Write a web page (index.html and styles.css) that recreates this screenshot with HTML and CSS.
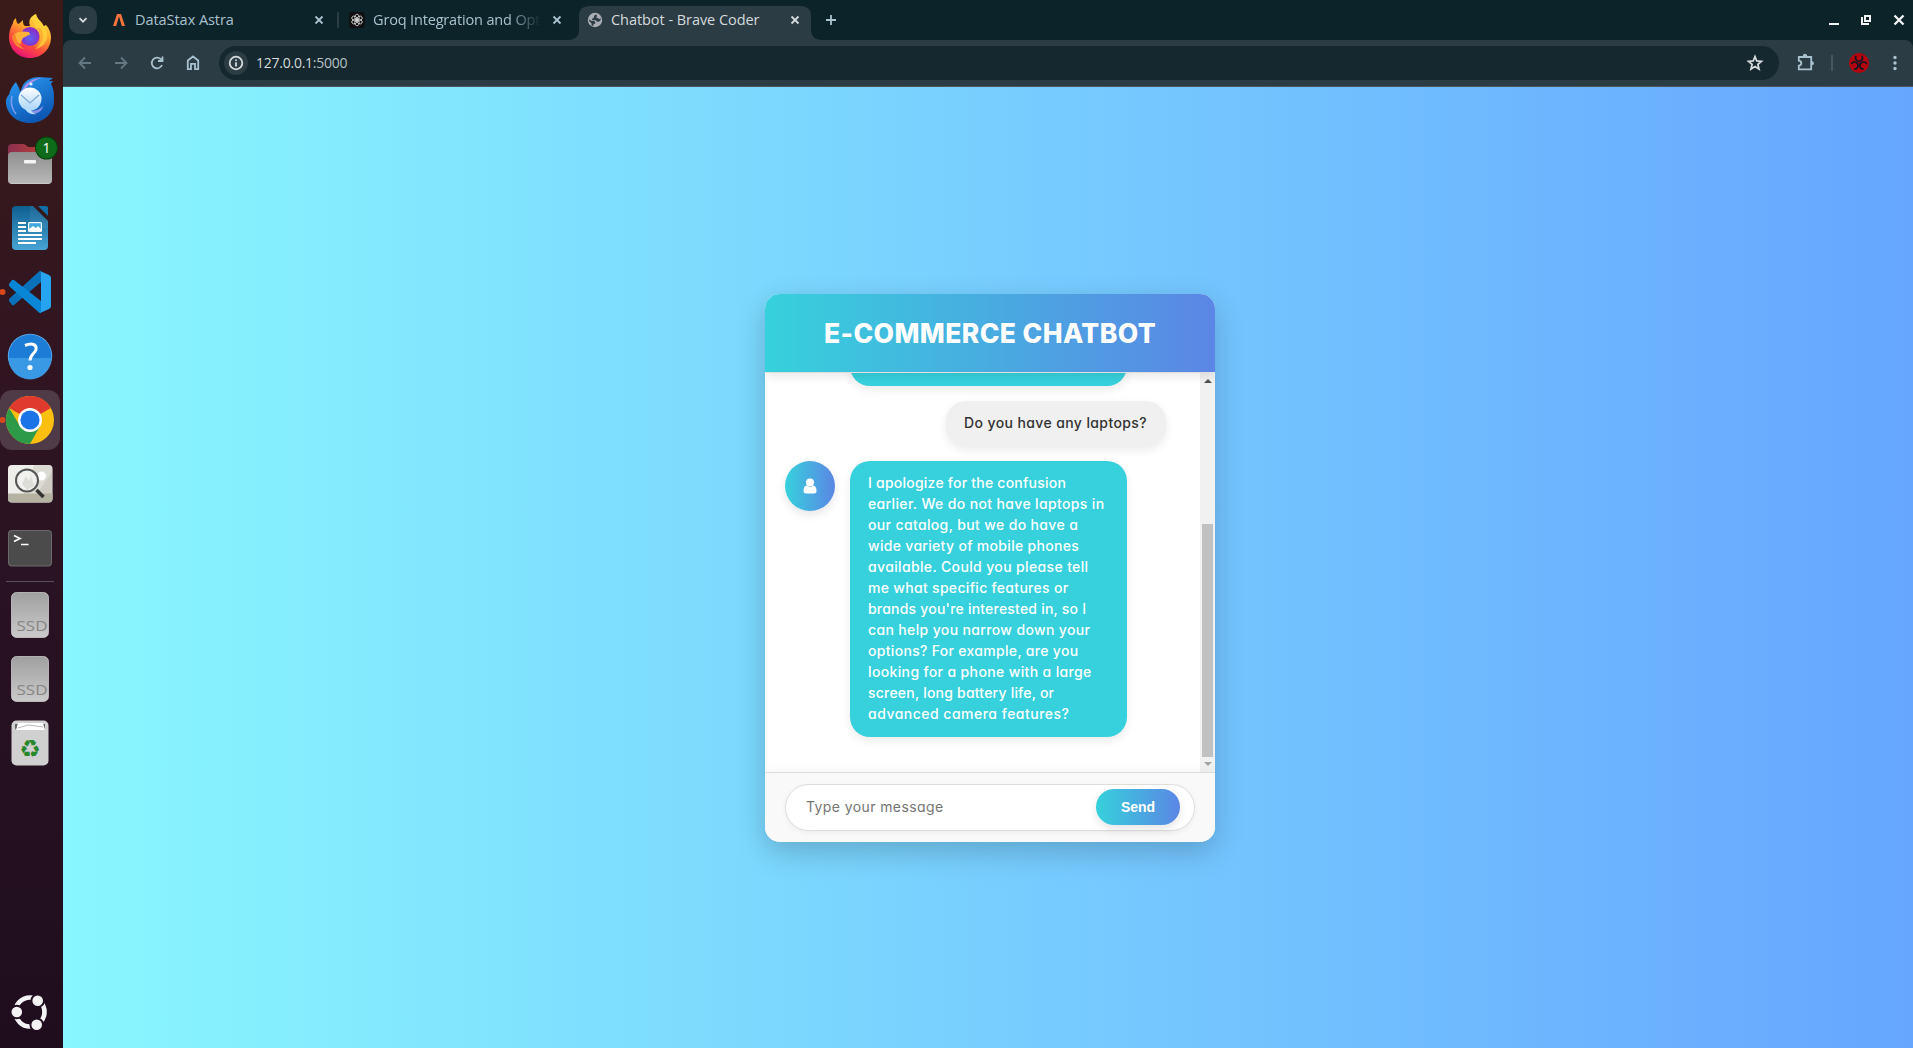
FILE: index.html
```html
<!DOCTYPE html>
<html lang="en">
<head>
<meta charset="utf-8">
<title>Chatbot - Brave Coder</title>
<link rel="stylesheet" href="styles.css">
</head>
<body>
<div class="desktop">
  <nav class="dock">
    <svg class="app" viewBox="0 0 60 60">
      <defs>
        <linearGradient id="ffBody" x1=".8" y1="0" x2=".3" y2="1"><stop offset="0" stop-color="#fff04a"/><stop offset=".4" stop-color="#ffa62b"/><stop offset=".7" stop-color="#ff4a3e"/><stop offset="1" stop-color="#e5107a"/></linearGradient>
        <radialGradient id="ffCore" cx=".5" cy=".6"><stop offset="0" stop-color="#5b62ee"/><stop offset="1" stop-color="#8b2fc9"/></radialGradient>
      </defs>
      <path fill="url(#ffBody)" d="M9 31c0-6 2-10 4-14 0-2 1-3 3-5 0 3 1 5 2 6 2-1 3-2 5-4 0 3 0 5 2 6h5c-2-6 1-10 6-12 1 5 4 6 6 9 1 1 1 3 2 3l2-1c3 3 5 8 5 12 0 12-9 21-21 21S9 43 9 31z"/>
      <circle cx="30" cy="30.500" r="9.500" fill="url(#ffCore)"/>
      <path fill="#ffb13a" d="M14 28c4-3 9-3 15-2l1 3c-3 0-4 2-7 3-2 4-3 5-2 7-4-3-7-6-7-11z"/>
      <path fill="#ff8430" d="M15 27c1 6 3 13 10 16-8 0-13-7-13-13z"/>
      <path fill="#ffd33b" opacity=".8" d="M36 8c1 7 10 11 11 20 1 8-5 14-12 15 7-4 7-12 3-18-3-5-6-10-2-17z"/>
      <path fill="#ffa531" opacity=".75" d="M37 22c5 7 4 15-3 19 9-2 12-11 6-19z"/>
    </svg>
    <svg class="app" viewBox="0 0 60 60">
      <defs><linearGradient id="tb" x1="0" y1="0" x2=".5" y2="1"><stop offset="0" stop-color="#2c9cf5"/><stop offset="1" stop-color="#0c58b4"/></linearGradient><linearGradient id="mail" x1="0" y1="0" x2="0" y2="1"><stop offset="0" stop-color="#fff"/><stop offset="1" stop-color="#a8d4fb"/></linearGradient></defs>
      <path fill="url(#tb)" d="M6 30c1-3 2-5 3-5 1-5 3-9 7-13 1 3 4 6 4 10l3-7c3-5 9-8 16-8l14 1-4 3h4l-2 3c3 5 3 10 3 17 0 12-10 22-24 22S5 43 6 30z"/>
      <path fill="#a78fea" d="M22 21c3-8 10-13 20-13-8 2-12 6-15 9l-3 6z"/>
      <path fill="none" stroke="#7c9df0" stroke-width="1.500" d="M12 26c-2 8 0 13 4 18"/>
      <path fill="#8a91ea" d="M28 40c6 2 11 0 15-4-1 6-7 9-13 7z"/>
      <circle cx="30" cy="29" r="11.500" fill="url(#mail)"/>
      <path fill="#b7dcfc" d="M25 38l6 1c0 3 2 4 5 5-5 1-10-2-11-6z"/>
      <path fill="none" stroke="#7ba7d8" stroke-width="1.200" d="M21 25l9 8 9-8"/>
      <circle cx="31" cy="14" r="1.600" fill="#d7f0ff"/>
    </svg>
    <svg class="app" viewBox="0 4 60 60">
      <defs><linearGradient id="dir" x1="0" y1="0" x2="0" y2="1"><stop offset="0" stop-color="#8f8f8f"/><stop offset="1" stop-color="#b9b9b9"/></linearGradient><linearGradient id="dirBack"><stop offset="0" stop-color="#8b2f51"/><stop offset="1" stop-color="#c8452f"/></linearGradient></defs>
      <path fill="url(#dirBack)" d="M8 25v-7q0-4 4-4h11q2 0 4 2l1 1h20q4 0 4 4v10H8z"/>
      <rect x="8" y="22" width="44" height="32" rx="4" fill="url(#dir)"/>
      <path stroke="#c8c8c8" stroke-width="1" d="M11 53.500h38"/>
      <rect x="24" y="30" width="12" height="3.500" rx="1" fill="#f4f4f4"/>
      <circle cx="46.500" cy="18" r="11.500" fill="#073f0b"/><circle cx="46.500" cy="18" r="10.500" fill="#0e6b1a"/>
      <text x="46.500" y="23" class="badge-text">1</text>
    </svg>
    <svg class="app" viewBox="0 0 60 60">
      <defs><linearGradient id="wr" x1="0" y1="0" x2="0" y2="1"><stop offset="0" stop-color="#0e5f90"/><stop offset="1" stop-color="#47a4d4"/></linearGradient></defs>
      <path fill="url(#wr)" d="M16 8h17l15 15v25q0 4-4 4H16q-4 0-4-4V12q0-4 4-4z"/>
      <path fill="#fff" opacity=".06" d="M30 8h3l15 15v7H30z"/>
      <path fill="#0f6fa6" d="M38 8h8q2 0 2 2v8z"/>
      <path stroke="#fff" stroke-width="2" d="M18 25h8M18 29h8M18 33h8M18 37h24M18 41h24M18 45h18"/>
      <rect x="28" y="24" width="14" height="10" rx="1.500" fill="#fff"/><rect x="29.200" y="25.200" width="11.600" height="7.600" fill="#3fa7dc"/>
      <path fill="#fff" d="M29 33v-2l4-3 3 2 2-2 3 3v2z"/>
    </svg>
    <svg class="app" viewBox="0 0 60 60">
      <path fill="#0a72ba" d="M9 39l3 4q1 .7 2 0L41 20V9q-1-.5-2 .5L10 36q-1.500 1.500-1 3z"/>
      <path fill="#0a86d6" d="M9 22l3-4q1-.7 2 0l27 21v12q-1 .5-2-.5L10 25q-1.500-1.500-1-3z"/>
      <path fill="#27a4f0" d="M40 9l9 4q2 1 2 3v28q0 2-2 3l-9 4q1 0 1-2V11q0-2-1-2z"/>
      <circle cx="2.500" cy="30" r="3" fill="#d9481c"/>
    </svg>
    <svg class="app" viewBox="0 0 60 60">
      <circle cx="30" cy="30" r="22.200" fill="#65b3ee"/><circle cx="30" cy="30" r="21.400" fill="#1d7cd6"/>
      <path fill="#3a99e4" d="M8.600 32h42.800a21.400 21.400 0 0 1-42.800 0z"/>
      <path fill="none" stroke="#fff" stroke-width="3" d="M25 19.500c7-3 12-1 11 4-.8 4-6 5-6 11"/>
      <circle cx="30" cy="41.500" r="2.600" fill="#fff"/>
    </svg>
    <svg class="app running" viewBox="0 0 60 60">
      <circle cx="30" cy="30" r="24" fill="#fbbf10"/>
      <path fill="#e03a2f" d="M30 30L9.200 18a24 24 0 0 1 41.600 0z"/>
      <path fill="#2d9a48" d="M30 54A24 24 0 0 1 9.200 18L20 36l10 5 9-3z"/>
      <circle cx="30" cy="30" r="12" fill="#fff"/><circle cx="30" cy="30" r="9.600" fill="#1b73e8"/>
      <circle cx="2.500" cy="30" r="3" fill="#d9481c"/>
    </svg>
    <svg class="app" viewBox="0 0 60 60">
      <rect x="8" y="11" width="44.500" height="37.500" rx="4" fill="#eeeeea"/>
      <path fill="#d3d2c9" d="M34 11h14q4 0 4 4v29H22z" opacity=".7"/><path fill="#c4c3b8" d="M52 18v26H34z" opacity=".6"/>
      <path fill="#b5b2a2" d="M8 39.500h44.500V45q0 3.500-4 3.500H12q-4 0-4-3.500z"/>
      <circle cx="41.500" cy="22" r="4.500" fill="#fff"/>
      <circle cx="27" cy="26.500" r="11" fill="#f3f3f1" fill-opacity=".8" stroke="#555" stroke-width="2"/>
      <path fill="#ddddd8" d="M22 30l4-8 3 5 2-5 3 10-7 4z"/>
      <path stroke="#333" stroke-width="3.500" d="M36.500 36l7 7"/>
    </svg>
    <svg class="app" viewBox="0 0 60 60">
      <rect x="8" y="12" width="44" height="36.500" rx="4" fill="#6a6a6a"/><rect x="9" y="13" width="42" height="34.500" rx="3.500" fill="#4b4b4b"/>
      <path fill="none" stroke="#fff" stroke-width="1.700" d="M14 17.500l6 3-6 3M21 26.500h7.500"/>
    </svg>
    <div class="dock-rule"></div>
    <svg class="app" viewBox="0 0 60 60">
      <defs><linearGradient id="ssd" x1="0" y1="0" x2="0" y2="1"><stop offset="0" stop-color="#a0a0a0"/><stop offset="1" stop-color="#cacaca"/></linearGradient></defs>
      <rect x="11.500" y="7.500" width="37" height="45" rx="5" fill="url(#ssd)" stroke="#d6d6d6" stroke-width=".7"/>
      <text x="32" y="46" class="ssd-text" textLength="31" lengthAdjust="spacingAndGlyphs">SSD</text>
    </svg>
    <svg class="app" viewBox="0 0 60 60">
      <rect x="11.500" y="7.500" width="37" height="45" rx="5" fill="url(#ssd)" stroke="#d6d6d6" stroke-width=".7"/>
      <text x="32" y="46" class="ssd-text" textLength="31" lengthAdjust="spacingAndGlyphs">SSD</text>
    </svg>
    <svg class="app" viewBox="0 0 60 60">
      <rect x="11.500" y="7.500" width="37" height="45" rx="5" fill="#d0d0d0"/>
      <path fill="#666" d="M15 11h30v4q0 2-2 2H17q-2 0-2-2z"/><path fill="#fff" d="M18 10h25l2 7H16z"/><path fill="none" stroke="#bbb" d="M18 15l10-3 15 2"/>
      <text x="30" y="43.500" class="recycle">♻</text>
    </svg>
    <svg class="app launcher" viewBox="0 0 60 60">
      <circle cx="30" cy="30" r="14.500" fill="none" stroke="#f4f4f4" stroke-width="4.600"/>
      <g fill="#f4f4f4" stroke="#210f20" stroke-width="2"><circle cx="16.800" cy="30" r="6.300"/><circle cx="37.700" cy="18.700" r="6.300"/><circle cx="36.700" cy="42.700" r="6.300"/></g>
    </svg>
  </nav>

  <main class="browser">
    <header class="tabs">
      <button class="tab-search"><svg width="12" height="12" viewBox="0 0 12 12"><path class="line bright" d="M2.500 4.200L6 7.700l3.500-3.500"/></svg></button>
      <div class="tab ruled">
        <svg class="favicon" viewBox="0 0 16 16"><path fill="#f4743b" d="M2 14L6 2h4l4 12h-3.200L8 4.500 5.200 14z"/></svg>
        <span class="tab-title">DataStax Astra</span>
        <svg class="close" viewBox="0 0 12 12"><path class="line" d="M2.500 2.500l7 7M9.500 2.500l-7 7"/></svg>
      </div>
      <div class="tab">
        <svg class="favicon" viewBox="0 0 16 16"><rect width="16" height="16" rx="3" fill="#111"/><g fill="none" stroke="#ddd" stroke-width=".8"><ellipse cx="8" cy="5.400" rx="2.200" ry="3.200"/><ellipse cx="8" cy="5.400" rx="2.200" ry="3.200" transform="rotate(60 8 8)"/><ellipse cx="8" cy="5.400" rx="2.200" ry="3.200" transform="rotate(120 8 8)"/><ellipse cx="8" cy="5.400" rx="2.200" ry="3.200" transform="rotate(180 8 8)"/><ellipse cx="8" cy="5.400" rx="2.200" ry="3.200" transform="rotate(240 8 8)"/><ellipse cx="8" cy="5.400" rx="2.200" ry="3.200" transform="rotate(300 8 8)"/></g></svg>
        <span class="tab-title fade">Groq Integration and Opt</span>
        <svg class="close" viewBox="0 0 12 12"><path class="line" d="M2.500 2.500l7 7M9.500 2.500l-7 7"/></svg>
      </div>
      <div class="tab active">
        <svg class="tab-shape" viewBox="0 0 256 34"><path fill="#2b3c45" d="M0 34q12 0 12-10V10Q12 0 22 0h212q10 0 10 10v14q0 10 12 10z"/></svg>
        <svg class="favicon" viewBox="0 0 16 16"><circle cx="8" cy="8" r="7.200" fill="#a9adb5"/><path fill="#2b3c45" d="M9.500 2.200L7 3.800v1.700L5.200 6.800v1.400h3.600l1.200 1.600h1.800l1.600-1.200.5-2-1.900.4-1.500-1.300H8.800L10 4.500z"/><path fill="#2b3c45" d="M2.300 7.300L4.500 9h2.800l1 1.600v1.200H6.800l-.6 2.100-1.700-.8v-1.900L2.300 9.300z"/></svg>
        <span class="tab-title">Chatbot - Brave Coder</span>
        <svg class="close" viewBox="0 0 12 12"><path class="line bright" d="M2.500 2.500l7 7M9.500 2.500l-7 7"/></svg>
      </div>
      <svg class="new-tab" viewBox="0 0 28 28"><path class="line" d="M9 14h10M14 9v10"/></svg>
      <div class="window-buttons">
        <svg viewBox="0 0 32 32"><path fill="#f2f4f4" d="M10 19h10v2H10z"/></svg>
        <svg viewBox="0 0 32 32"><path fill="none" stroke="#f2f4f4" stroke-width="2" d="M14 12h5v5h-5zM11 13v7h7"/></svg>
        <svg viewBox="0 0 32 32"><path fill="none" stroke="#f2f4f4" stroke-width="2.300" d="M11.500 11.500l9 9M20.500 11.500l-9 9"/></svg>
      </div>
    </header>

    <div class="toolbar">
      <svg class="tool dim" viewBox="0 0 36 36"><path class="line" d="M24 18H13M18 12.500L12.500 18l5.500 5.500"/></svg>
      <svg class="tool dim" viewBox="0 0 36 36"><path class="line" d="M12 18h11M18 12.500l5.500 5.500-5.500 5.500"/></svg>
      <svg class="tool" viewBox="0 0 36 36"><path class="line" d="M23 20a5.300 5.300 0 1 1-1.200-5.800l1.700 1.700M23.500 11.500V16H19"/></svg>
      <svg class="tool" viewBox="0 0 36 36"><path class="line" d="M12.800 15.500L18 11.500l5.200 4v8.700H20v-5.400h-4v5.400h-3.200z"/></svg>
      <div class="address">
        <span class="site-info"><svg viewBox="0 0 24 24"><circle class="line bright" cx="12" cy="12" r="6.300"/><path class="line bright" d="M12 11.200v4.300M12 8.500v1.500"/></svg></span>
        <span class="url">127.0.0.1<span class="port">:5000</span></span>
        <svg class="star" viewBox="0 0 24 24"><path class="line bright" d="M12 5.700l1.800 4.300 4.600.4-3.500 3 1.100 4.600-4-2.500L8 18l1.100-4.600-3.500-3 4.600-.4z"/></svg>
      </div>
      <svg class="tool" viewBox="0 0 36 36"><path class="line" d="M11.800 12h12.400v12.400H11.800v-3.700q2.500-.4 2.500-2.500t-2.500-2.500z"/><path fill="#a9c2cf" d="M15.800 11.500q0-2.700 2.200-2.700t2.200 2.700zM24.500 16q2.500.4 2.500 2.200t-2.500 2.200z"/></svg>
      <span class="tool-rule"></span>
      <svg class="tool" viewBox="0 0 36 36"><circle cx="18" cy="18" r="10" fill="#b6040f"/><g fill="none" stroke="#1b1420" stroke-width="1.700"><path d="M15.200 10.800a3.500 3.500 0 1 0 5.600 0"/><path d="M15.200 10.800a3.500 3.500 0 1 0 5.600 0" transform="rotate(120 18 18)"/><path d="M15.200 10.800a3.500 3.500 0 1 0 5.600 0" transform="rotate(240 18 18)"/></g></svg>
      <svg class="tool" viewBox="0 0 36 36"><g fill="#a9c2cf"><circle cx="18" cy="12.500" r="1.700"/><circle cx="18" cy="18" r="1.700"/><circle cx="18" cy="23.500" r="1.700"/></g></svg>
    </div>

    <section class="page">
      <div class="chat">
        <h1 class="chat-title">E-COMMERCE CHATBOT</h1>
        <div class="chat-body">
          <div class="messages">
            <div class="bubble bot cut"></div>
            <div class="bubble user">Do you have any laptops?</div>
            <div class="reply">
              <div class="avatar"><svg width="14" height="16" viewBox="0 0 14 16"><circle cx="7" cy="4.500" r="4" fill="#fff"/><path fill="#fff" d="M3.500 7.500Q7 10 10.500 7.500q3 .5 3 5.500 0 2.500-2.500 2.500H3Q.5 15.500.5 13q0-5 3-5.500z"/></svg></div>
              <p class="bubble bot">
                <span>I apologize for the confusion</span>
                <span>earlier. We do not have laptops in</span>
                <span>our catalog, but we do have a</span>
                <span>wide variety of mobile phones</span>
                <span>available. Could you please tell</span>
                <span>me what specific features or</span>
                <span>brands you're interested in, so I</span>
                <span>can help you narrow down your</span>
                <span>options? For example, are you</span>
                <span>looking for a phone with a large</span>
                <span>screen, long battery life, or</span>
                <span>advanced camera features?</span>
              </p>
            </div>
          </div>
          <div class="scrollbar"><i class="up"></i><i class="thumb"></i><i class="down"></i></div>
        </div>
        <div class="composer">
          <div class="field"><span class="placeholder">Type your message</span><button class="send">Send</button></div>
        </div>
      </div>
    </section>
  </main>
</div>
</body>
</html>
```
FILE: styles.css
```css
* { box-sizing: border-box; }
body { margin: 0; overflow: hidden; }
button { border: 0; padding: 0; }
svg { display: block; flex: none; }

.desktop { display: flex; width: 100vw; height: 100vh; }

/* Dock */
.dock {
  display: flex; flex-direction: column; flex: none;
  width: 63px; padding: 6px 0;
  background: linear-gradient(#3b1b19, #301521 35%, #281222 60%, #1f0d1e);
}
.app { width: 60px; height: 60px; margin-bottom: 4px; }
.app.running { background: #4f3a48; border-radius: 12px; }
.launcher { margin: auto 0 0; }
.dock-rule { flex: none; width: 48px; height: 1px; margin: -1px 0 3px 6px; background: #5a5058; }
.badge-text { font: 14px "Open Sans", sans-serif; fill: #fff; text-anchor: middle; }
.ssd-text { font: 15px "Open Sans", sans-serif; fill: #858585; text-anchor: middle; }
.recycle { font: 24px "DejaVu Sans", sans-serif; fill: #27872a; text-anchor: middle; }

/* Browser chrome */
.browser { display: flex; flex-direction: column; flex: 1; min-width: 0; font-family: "Open Sans", sans-serif; background: #0d232a; }
.line { fill: none; stroke: #a9c2cf; stroke-width: 1.8; }
.line.bright { stroke: #d5dadc; }
.tabs { display: flex; align-items: center; height: 40px; padding-left: 6px; }
.tab-search { display: grid; place-items: center; width: 28px; height: 28px; margin-right: 4px; border-radius: 10px; background: #2b3c45; }
.tab { position: relative; display: flex; align-items: center; width: 238px; height: 40px; padding: 0 14px 0 10px; color: #a9c2cf; font-size: 14.5px; letter-spacing: -.05px; }
.tab.ruled::after { content: ""; position: absolute; right: 0; top: 12px; width: 2px; height: 16px; background: #2b3c45; }
.tab.active { color: #d5dadc; }
.tab-shape { position: absolute; left: -10px; top: 6px; width: 256px; height: 34px; }
.favicon { position: relative; width: 16px; height: 16px; margin-right: 8px; }
.tab-title { position: relative; flex: none; width: 168px; padding-bottom: 1px; white-space: nowrap; }
.fade { letter-spacing: -.16px; mask-image: linear-gradient(to right, #000 135px, transparent 168px); }
.close { position: relative; width: 12px; height: 12px; margin-left: 10px; }
.new-tab { width: 28px; height: 28px; margin-left: 2px; }
.window-buttons { display: flex; align-self: flex-start; margin-right: -2px; margin-left: auto; padding-top: 4px; }
.window-buttons svg { width: 32px; height: 32px; }

.toolbar {
  display: flex; align-items: center; height: 47px; padding-left: 4px;
  background: #2b3c45; border-bottom: 1px solid #4b555b; border-radius: 8px 8px 0 0;
}
.tool { width: 36px; height: 36px; }
.dim { opacity: .45; }
.address { display: flex; align-items: center; flex: 1; height: 34px; margin: 0 8px; padding: 0 12px 0 5px; border-radius: 17px; background: #15272f; }
.site-info { width: 24px; height: 24px; border-radius: 50%; background: #2b3c45; }
.url { flex: 1; margin-left: 8px; padding-bottom: 1px; color: #d5dadc; font-size: 14px; letter-spacing: -.25px; }
.port { color: #b8c0c4; }
.star { width: 24px; height: 24px; }
.tool-rule { width: 2px; height: 16px; margin: 0 8px; background: #455862; }

/* Page */
.page { display: flex; justify-content: center; align-items: flex-start; flex: 1; padding: 207px 0 0 4px; background: linear-gradient(to right, #89f7fe, #66a6ff); }
.chat { display: flex; flex-direction: column; width: 450px; height: 548px; overflow: hidden; border-radius: 15px; background: #fff; box-shadow: 0 10px 30px rgba(0, 0, 0, .2); font-family: Inter, sans-serif; font-feature-settings: "cv11"; }
.chat-title { position: relative; z-index: 1; height: 78px; margin: 0; background: linear-gradient(to right, #36d1dc, #5b86e5); box-shadow: 0 4px 10px rgba(0, 0, 0, .1); color: #fff; font-size: 26.5px; font-weight: 800; line-height: 78px; letter-spacing: .4px; text-align: center; }
.chat-body { display: flex; height: 400px; border-top: 1px solid #f0f0f0; }
.messages { display: flex; flex-direction: column; flex: 1; padding: 0 34px 0 20px; overflow: hidden; }
.bubble { margin: 0; padding: 11px 18px 13px; border-radius: 20px; box-shadow: 0 4px 10px rgba(0, 0, 0, .08); font-size: 14px; font-weight: 500; line-height: 21px; white-space: nowrap; }
.bot { width: 277px; background: #36d1dc; color: #fff; }
.cut { flex: none; height: 50px; margin: -37px 0 15px 65px; }
.user { align-self: flex-end; width: 220px; background: #f0f0f0; color: #333; letter-spacing: .39px; }
.reply { display: flex; gap: 15px; margin-top: 15px; }

.bubble span { display: block; letter-spacing: .36px; }
.bubble span:nth-child(1) { letter-spacing: .23px; }
.bubble span:nth-child(4), .bubble span:nth-child(6), .bubble span:nth-child(9) { letter-spacing: .31px; }
.bubble span:nth-child(7), .bubble span:nth-child(11) { letter-spacing: .21px; }
.bubble span:nth-child(12) { letter-spacing: .49px; }

.avatar { display: grid; place-items: center; flex: none; width: 50px; height: 50px; border-radius: 50%; background: linear-gradient(to right, #36d1dc, #5b86e5); box-shadow: 0 4px 10px rgba(0, 0, 0, .1); }
.scrollbar { display: flex; flex-direction: column; align-items: center; width: 15px; padding: 6px 0; background: #f1f1f1; }
.up, .down { border: 4px solid transparent; }
.up { border-top: 0; border-bottom-color: #505050; }
.down { border-bottom: 0; border-top-color: #a3a3a3; margin-top: 5px; }
.thumb { width: 11px; height: 233px; margin-top: auto; background: #c1c1c1; }
.composer { position: relative; height: 70px; padding: 11px 20px; border-top: 1px solid #ddd; background: #f9f9f9; box-shadow: 0 -4px 10px rgba(0, 0, 0, .03); }
.field { display: flex; align-items: center; justify-content: space-between; height: 47px; padding: 0 14px 1px 20px; border: 1px solid #ddd; border-radius: 24px; background: #fff; box-shadow: 0 2px 5px rgba(0, 0, 0, .05); }
.placeholder { padding-bottom: 1px; color: #757575; font-size: 14px; letter-spacing: .4px; }
.send { width: 84px; height: 36px; border-radius: 18px; background: linear-gradient(to right, #36d1dc, #5b86e5); color: #fff; font: bold 14px "Liberation Sans", Arial, sans-serif; box-shadow: 0 4px 10px rgba(0, 0, 0, .1); }
```
